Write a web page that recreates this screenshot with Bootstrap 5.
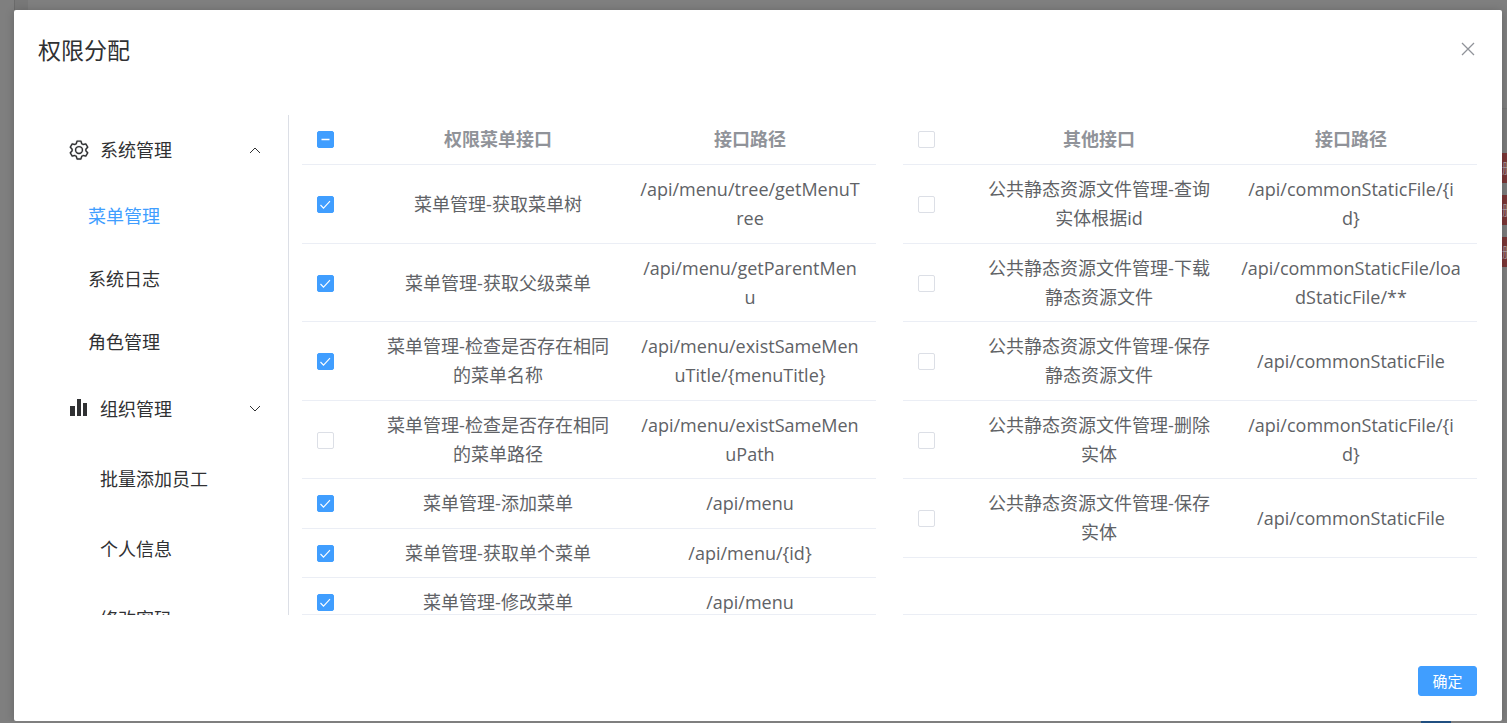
<!DOCTYPE html>
<html lang="zh-CN">
<head>
<meta charset="utf-8">
<meta name="viewport" content="width=device-width, initial-scale=1">
<title>权限分配</title>
<link href="https://cdn.jsdelivr.net/npm/bootstrap@5.3.0/dist/css/bootstrap.min.css" rel="stylesheet">
<style>
body{background:#7f7f7f;font-family:"Open Sans","Noto Sans CJK SC",sans-serif;font-size:18px;line-height:29px;color:#606266;overflow:hidden}
/* page content that shows round the dialog, under the mask */
.page-under{position:absolute;inset:0;overflow:hidden}
.under-edge{position:absolute;left:14px;top:0;width:14px;height:10px;background:#787878;border-left:1px solid #6b6b6b}
.under-actions{position:absolute;right:0;top:108px;width:5px;padding-top:44px;display:flex;flex-direction:column;gap:12px;border-top:1px solid #767676;background:#7c7c7c}
.under-actions span{height:30px;background:#7b3636;color:#a99;font-size:14px;line-height:30px;white-space:nowrap;overflow:hidden}
.under-primary{position:absolute;left:1421px;bottom:0;width:30px;height:3px;background:#204f80}
.dialog{position:relative;margin:10px 5px 0 14px;background:#fff;border-radius:2px;box-shadow:0 1px 10px rgba(0,0,0,.2)}
.dialog-head{padding:25px 24px 0}
.dialog-title{font-size:23px;line-height:30px;color:#303133;margin:0;font-weight:400}
.close-btn{border:0;background:none;padding:0;width:20px;height:28px;color:#909399}
.main-row{margin-top:50px;padding:0 25px}
.dialog-foot{padding:51px 25px 25px}
.pane{height:500px;overflow:hidden}
.side{width:250px;border-right:1px solid #dcdfe6;flex:none}
.side a{display:flex;align-items:center;color:#303133;text-decoration:none}
.side .group-link{height:70px;padding:0 27px 0 29px;gap:10px}
.leaf-link{height:63px;padding-left:49px}
.nested-link{height:70px;padding-left:61px}
.side a.current{color:#409eff}
.panes{padding-left:13px;gap:27px;min-width:0}
.api-pane{border-bottom:1px solid #ebeef5;flex:1 1 0;min-width:0}
.api-table{width:100%;table-layout:fixed;border-collapse:separate;border-spacing:0}
.api-table th,.api-table td{border-bottom:1px solid #ebeef5;padding:10px 12px;text-align:center;word-break:break-all;vertical-align:middle}
.api-table tbody tr:nth-child(even) td{padding-bottom:9px}
.api-table td:last-child{padding-left:16px;padding-right:16px}
.api-table th{color:#909399;font-weight:700}
.api-table .pick{width:70px;text-align:left;padding-left:15px}
.api-table .form-check-input{display:block;width:17px;height:17px;margin:0;border:1px solid #dcdfe6;border-radius:2px}
.api-table .form-check-input:checked,.api-table .form-check-input:indeterminate{background-color:#409eff;border-color:#409eff}
.api-table .form-check-input:checked{background-image:url("data:image/svg+xml,%3csvg xmlns='http://www.w3.org/2000/svg' viewBox='0 0 15 15'%3e%3cpath fill='none' stroke='white' stroke-width='1.1' d='M2.5 8l3 3.2 6.5-7'/%3e%3c/svg%3e")}
.api-table .form-check-input:indeterminate{background-image:url("data:image/svg+xml,%3csvg xmlns='http://www.w3.org/2000/svg' viewBox='0 0 15 15'%3e%3cpath fill='none' stroke='white' stroke-width='1.3' d='M3.5 7.5h8'/%3e%3c/svg%3e")}
.confirm-btn{--bs-btn-bg:#409eff;--bs-btn-border-color:#409eff;--bs-btn-color:#fff;--bs-btn-font-size:15px;--bs-btn-border-radius:3px;--bs-btn-padding-x:13px;--bs-btn-padding-y:0px;line-height:28px;min-width:59px}
</style>
</head>
<body>
<div class="page-under" aria-hidden="true">
  <div class="under-edge"></div>
  <div class="under-actions"><span>删</span><span>删</span><span>删</span></div>
  <div class="under-primary"></div>
</div>
<div class="dialog" role="dialog" aria-labelledby="dlg">
  <header class="dialog-head d-flex justify-content-between align-items-start">
    <h1 class="dialog-title" id="dlg">权限分配</h1>
    <button class="close-btn d-flex align-items-center justify-content-center" type="button" aria-label="关闭"><svg width="14" height="14" viewBox="0 0 14 14" fill="none" stroke="currentColor" stroke-width="1.3"><path d="M1 1l12 12M13 1L1 13"/></svg></button>
  </header>
  <main class="d-flex main-row">
    <nav class="side pane">
      <a href="#" class="group-link"><svg class="flex-shrink-0" width="22" height="22" viewBox="0 0 1024 1024" fill="currentColor"><path d="M600.704 64a32 32 0 0130.464 22.208l35.2 109.376c14.784 7.232 28.928 15.36 42.432 24.512l112.384-24.192a32 32 0 0134.432 15.36L944.32 364.8a32 32 0 01-4.032 37.504l-77.12 85.12a357.12 357.12 0 010 49.024l77.12 85.248a32 32 0 014.032 37.504l-88.704 153.6a32 32 0 01-34.432 15.296L708.8 803.904c-13.44 9.088-27.648 17.28-42.368 24.512l-35.264 109.376A32 32 0 01600.704 960H423.296a32 32 0 01-30.464-22.208L357.696 828.48a351.616 351.616 0 01-42.56-24.64l-112.32 24.256a32 32 0 01-34.432-15.36L79.68 659.2a32 32 0 014.032-37.504l77.12-85.248a357.12 357.12 0 010-48.896l-77.12-85.248A32 32 0 0179.68 364.8l88.704-153.6a32 32 0 0134.432-15.296l112.32 24.256c13.568-9.152 27.776-17.408 42.56-24.64l35.2-109.312A32 32 0 01423.232 64H600.64zm-23.424 64H446.72l-36.352 113.088-24.512 11.968a294.113 294.113 0 00-34.816 20.096l-22.656 15.36-116.224-25.088-65.28 113.152 79.68 88.192-1.92 27.136a293.12 293.12 0 000 40.192l1.92 27.136-79.808 88.192 65.344 113.152 116.224-25.024 22.656 15.296a294.113 294.113 0 0034.816 20.096l24.512 11.968L446.72 896h130.688l36.48-113.152 24.448-11.904a288.282 288.282 0 0034.752-20.096l22.592-15.296 116.288 25.024 65.28-113.152-79.744-88.192 1.92-27.136a293.12 293.12 0 000-40.256l-1.92-27.136 79.808-88.128-65.344-113.152-116.288 24.96-22.592-15.232a287.616 287.616 0 00-34.752-20.096l-24.448-11.904L577.344 128zM512 320a192 192 0 110 384 192 192 0 010-384zm0 64a128 128 0 100 256 128 128 0 000-256z" stroke="currentColor" stroke-width="6"/></svg><span class="flex-fill">系统管理</span><svg width="12" height="8" viewBox="0 0 12 8" fill="none" stroke="currentColor"><path d="M1 7l5-5 5 5"/></svg></a>
      <a href="#" class="leaf-link current">菜单管理</a>
      <a href="#" class="leaf-link">系统日志</a>
      <a href="#" class="leaf-link">角色管理</a>
      <a href="#" class="group-link"><svg class="flex-shrink-0" width="22" height="22" viewBox="0 0 22 22" fill="currentColor"><path d="M2 8h5v10H2zM9 1h4v17H9zM15 5h4v13h-4z"/></svg><span class="flex-fill">组织管理</span><svg width="12" height="8" viewBox="0 0 12 8" fill="none" stroke="currentColor"><path d="M1 1l5 5 5-5"/></svg></a>
      <a href="#" class="nested-link">批量添加员工</a>
      <a href="#" class="nested-link">个人信息</a>
      <a href="#" class="nested-link">修改密码</a>
    </nav>
    <div class="panes d-flex flex-fill">
    <section class="api-pane pane">
      <table class="api-table">
        <thead><tr><th class="pick"><input class="form-check-input" type="checkbox" id="all-menu" aria-label="全选"></th><th>权限菜单接口</th><th>接口路径</th></tr></thead>
        <tbody>
          <tr><td class="pick"><input class="form-check-input" type="checkbox" aria-label="获取菜单树" checked></td><td>菜单管理-获取菜单树</td><td>/api/menu/tree/getMenuT<wbr>ree</td></tr>
          <tr><td class="pick"><input class="form-check-input" type="checkbox" aria-label="获取父级菜单" checked></td><td>菜单管理-获取父级菜单</td><td>/api/menu/getParentMen<br>u</td></tr>
          <tr><td class="pick"><input class="form-check-input" type="checkbox" aria-label="检查菜单名称" checked></td><td>菜单管理-检查是否存在相同的菜单名称</td><td>/api/menu/existSameMen<br>uTitle/{menuTitle}</td></tr>
          <tr><td class="pick"><input class="form-check-input" type="checkbox" aria-label="检查菜单路径"></td><td>菜单管理-检查是否存在相同的菜单路径</td><td>/api/menu/existSameMen<br>uPath</td></tr>
          <tr><td class="pick"><input class="form-check-input" type="checkbox" aria-label="添加菜单" checked></td><td>菜单管理-添加菜单</td><td>/api/menu</td></tr>
          <tr><td class="pick"><input class="form-check-input" type="checkbox" aria-label="获取单个菜单" checked></td><td>菜单管理-获取单个菜单</td><td>/api/menu/{id}</td></tr>
          <tr><td class="pick"><input class="form-check-input" type="checkbox" aria-label="修改菜单" checked></td><td>菜单管理-修改菜单</td><td>/api/menu</td></tr>
        </tbody>
      </table>
    </section>
    <section class="api-pane pane">
      <table class="api-table">
        <thead><tr><th class="pick"><input class="form-check-input" type="checkbox" aria-label="全选"></th><th>其他接口</th><th>接口路径</th></tr></thead>
        <tbody>
          <tr><td class="pick"><input class="form-check-input" type="checkbox" aria-label="查询实体"></td><td>公共静态资源文件管理-查询实体根据id</td><td>/api/commonStaticFile/{i<br>d}</td></tr>
          <tr><td class="pick"><input class="form-check-input" type="checkbox" aria-label="下载静态资源文件"></td><td>公共静态资源文件管理-下载静态资源文件</td><td>/api/commonStaticFile/loa<br>dStaticFile/**</td></tr>
          <tr><td class="pick"><input class="form-check-input" type="checkbox" aria-label="保存静态资源文件"></td><td>公共静态资源文件管理-保存静态资源文件</td><td>/api/commonStaticFile</td></tr>
          <tr><td class="pick"><input class="form-check-input" type="checkbox" aria-label="删除实体"></td><td>公共静态资源文件管理-删除实体</td><td>/api/commonStaticFile/{i<br>d}</td></tr>
          <tr><td class="pick"><input class="form-check-input" type="checkbox" aria-label="保存实体"></td><td>公共静态资源文件管理-保存实体</td><td>/api/commonStaticFile</td></tr>
        </tbody>
      </table>
    </section>
    </div>
  </main>
  <footer class="dialog-foot d-flex justify-content-end">
    <button type="button" class="btn confirm-btn">确定</button>
  </footer>
</div>
<script src="https://cdn.jsdelivr.net/npm/bootstrap@5.3.0/dist/js/bootstrap.bundle.min.js"></script>
<script>document.getElementById('all-menu').indeterminate = true;</script>
</body>
</html>
